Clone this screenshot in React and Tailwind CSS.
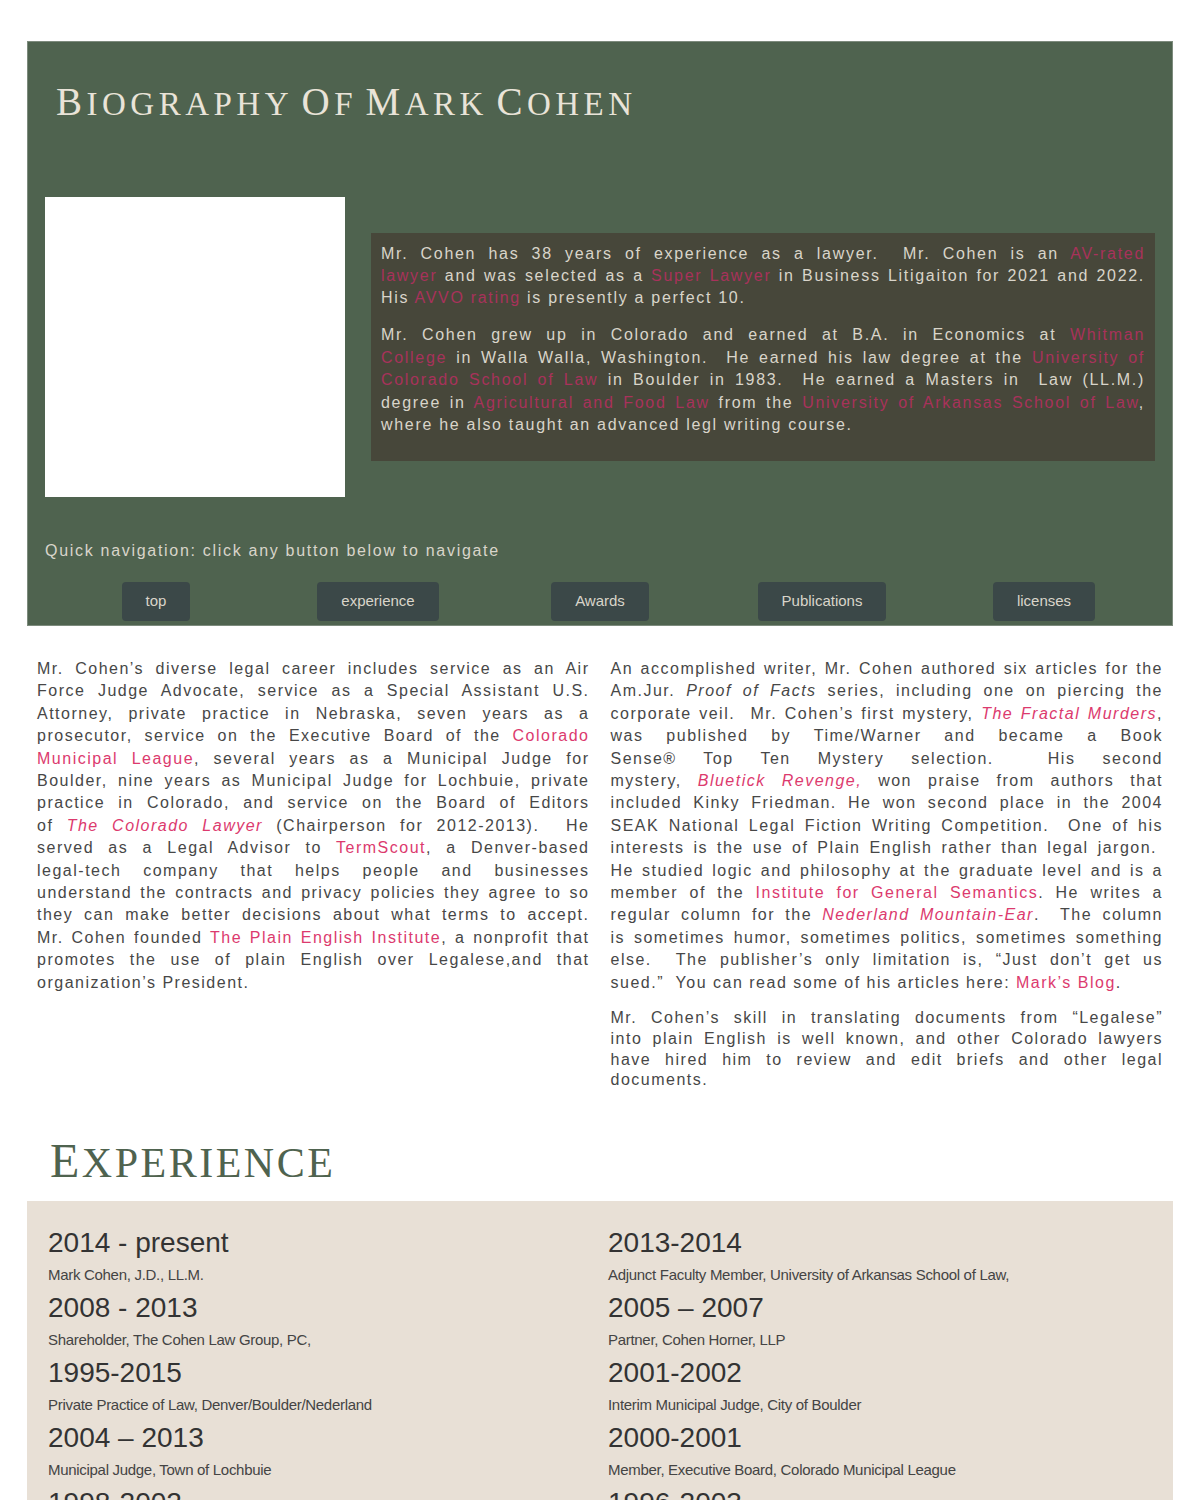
import React from 'react';

const navItems = ['top', 'experience', 'Awards', 'Publications', 'licenses'];

const leftJobs = [
  ['2014 - present', 'Mark Cohen, J.D., LL.M.'],
  ['2008 - 2013', 'Shareholder, The Cohen Law Group, PC,'],
  ['1995-2015', 'Private Practice of Law, Denver/Boulder/Nederland'],
  ['2004 – 2013', 'Municipal Judge, Town of Lochbuie'],
  ['1998-2002', 'Board of Editors, The Colorado Lawyer'],
];

const rightJobs = [
  ['2013-2014', 'Adjunct Faculty Member, University of Arkansas School of Law,'],
  ['2005 – 2007', 'Partner, Cohen Horner, LLP'],
  ['2001-2002', 'Interim Municipal Judge, City of Boulder'],
  ['2000-2001', 'Member, Executive Board, Colorado Municipal League'],
  ['1996-2003', 'Prosecutor, Boulder County'],
];

const sp = '\u00a0 ';

// small caps heading: first letter of each word larger
function SmallCaps({ text, big, small }) {
  return text.split(' ').map((word, i) => (
    <span key={i}>
      {i > 0 && ' '}
      <span className={big}>{word[0]}</span>
      <span className={small}>{word.slice(1).toUpperCase()}</span>
    </span>
  ));
}

function A({ children, italic }) {
  return (
    <a href="#" className={`text-[#dc3a6e] ${italic ? 'italic' : ''}`}>
      {children}
    </a>
  );
}

function B({ children }) {
  return <a href="#" className="text-[#a8325b]">{children}</a>;
}

// justified paragraph, broken the way the original page breaks it
function Lines({ lines, className = '' }) {
  return (
    <p className={`text-justify ${className}`}>
      {lines.map((line, i) => (
        <span
          key={i}
          className={`block whitespace-nowrap ${i < lines.length - 1 ? '[text-align-last:justify]' : ''}`}
        >
          {line}
        </span>
      ))}
    </p>
  );
}

function Jobs({ items }) {
  return (
    <div className="flex flex-col gap-[7px]">
      {items.map(([year, desc]) => (
        <div key={year}>
          <div className="text-[28px] leading-[32px] text-[#333]">{year}</div>
          <div className="mt-[6px] text-[15px] leading-[20px] tracking-[-0.3px] text-[#444]">
            {desc}
          </div>
        </div>
      ))}
    </div>
  );
}

export default function App() {
  return (
    <div className="min-h-screen bg-white pt-[41px] font-['Liberation_Sans',Arial,sans-serif]">
      {/* Header */}
      <section className="mx-[27px] bg-[#4f634f] border border-[#7d8b7d] px-[17px] pb-[4px]">
        <h1 className="pt-[40px] pl-[11px] h-[81px] leading-[40px] tracking-[4.5px] text-[#e9e3d8] font-['Liberation_Serif',serif] font-normal">
          <SmallCaps text="Biography Of Mark Cohen" big="text-[39px] leading-[40px]" small="text-[33px] leading-[40px]" />
        </h1>

        <div className="mt-[74px] flex items-center gap-[26px]">
          <div className="w-[300px] h-[300px] shrink-0 bg-white"></div>
          <div className="flex-1 bg-[#47473a] px-[10px] pt-[10px] pb-[25px] text-[16px] leading-[22.4px] tracking-[1.7px] text-[#d9d5ca]">
            <Lines
              className="mb-[14.6px]"
              lines={[
                <>Mr. Cohen has 38 years of experience as a lawyer.{sp}Mr. Cohen is an <B>AV-rated</B></>,
                <><B>lawyer</B> and was selected as a <B>Super Lawyer</B> in Business Litigaiton for 2021 and 2022.</>,
                <>His <B>AVVO rating</B> is presently a perfect 10.</>,
              ]}
            />
            <Lines
              lines={[
                <>Mr. Cohen grew up in Colorado and earned at B.A. in Economics at <B>Whitman</B></>,
                <><B>College</B> in Walla Walla, Washington.{sp}He earned his law degree at the <B>University of</B></>,
                <><B>Colorado School of Law</B> in Boulder in 1983.{sp}He earned a Masters in{sp}Law (LL.M.)</>,
                <>degree in <B>Agricultural and Food Law</B> from the <B>University of Arkansas School of Law</B>,</>,
                <>where he also taught an advanced legl writing course.</>,
              ]}
            />
          </div>
        </div>

        <p className="mt-[43px] text-[16px] leading-[22px] tracking-[1.7px] text-[#d9d5ca]">
          Quick navigation: click any button below to navigate
        </p>

        <div className="mt-[20px] grid grid-cols-5">
          {navItems.map((item) => (
            <div key={item} className="flex justify-center">
              <button className="h-[39px] px-6 rounded-[4px] bg-[#3b4848] text-[15px] text-[#d9d5ca]">
                {item}
              </button>
            </div>
          ))}
        </div>
      </section>

      {/* Intro columns */}
      <div className="mt-[32px] px-[37px] grid grid-cols-2 gap-[21px] text-[16px] leading-[22.4px] tracking-[1.5px] text-[#474747]">
        <div>
          <Lines
            lines={[
              <>Mr. Cohen’s diverse legal career includes service as an Air</>,
              <>Force Judge Advocate, service as a Special Assistant U.S.</>,
              <>Attorney, private practice in Nebraska, seven years as a</>,
              <>prosecutor, service on the Executive Board of the <A>Colorado</A></>,
              <><A>Municipal League</A>, several years as a Municipal Judge for</>,
              <>Boulder, nine years as Municipal Judge for Lochbuie, private</>,
              <>practice in Colorado, and service on the Board of Editors</>,
              <>of <A italic>The Colorado Lawyer</A> (Chairperson for 2012-2013).{sp}He</>,
              <>served as a Legal Advisor to <A>TermScout</A>, a Denver-based</>,
              <>legal-tech company that helps people and businesses</>,
              <>understand the contracts and privacy policies they agree to so</>,
              <>they can make better decisions about what terms to accept.</>,
              <>Mr. Cohen founded <A>The Plain English Institute</A>, a nonprofit that</>,
              <>promotes the use of plain English over Legalese,and that</>,
              <>organization’s President.</>,
            ]}
          />
        </div>
        <div>
          <Lines
            lines={[
              <>An accomplished writer, Mr. Cohen authored six articles for the</>,
              <>Am.Jur. <em>Proof of Facts</em> series, including one on piercing the</>,
              <>corporate veil.{sp}Mr. Cohen’s first mystery, <A italic>The Fractal Murders</A>,</>,
              <>was published by Time/Warner and became a Book</>,
              <>Sense® Top Ten Mystery selection.{sp}His second</>,
              <>mystery, <A italic>Bluetick Revenge,</A> won praise from authors that</>,
              <>included Kinky Friedman. He won second place in the 2004</>,
              <>SEAK National Legal Fiction Writing Competition.{sp}One of his</>,
              <>interests is the use of Plain English rather than legal jargon.{'\u00a0'}</>,
              <>He studied logic and philosophy at the graduate level and is a</>,
              <>member of the <A>Institute for General Semantics</A>. He writes a</>,
              <>regular column for the <A italic>Nederland Mountain-Ear</A>.{sp}The column</>,
              <>is sometimes humor, sometimes politics, sometimes something</>,
              <>else.{sp}The publisher’s only limitation is, “Just don’t get us</>,
              <>sued.”{sp}You can read some of his articles here: <A>Mark’s Blog</A>.</>,
            ]}
          />
          <Lines
            className="mt-[14px] leading-[20.7px]"
            lines={[
              <>Mr. Cohen’s skill in translating documents from “Legalese”</>,
              <>into plain English is well known, and other Colorado lawyers</>,
              <>have hired him to review and edit briefs and other legal</>,
              <>documents.</>,
            ]}
          />
        </div>
      </div>

      {/* Experience */}
      <h2 className="mt-[42px] pl-[50px] h-[56px] leading-[56px] tracking-[2.5px] text-[#4f634f] font-['Liberation_Serif',serif] font-normal">
        <SmallCaps text="Experience" big="text-[48px] leading-[56px]" small="text-[42px] leading-[56px]" />
      </h2>
      <section className="mt-[12px] mx-[27px] bg-[#e8e0d6] px-[21px] pt-[26px] pb-[30px] grid grid-cols-2 gap-[16px]">
        <Jobs items={leftJobs} />
        <Jobs items={rightJobs} />
      </section>
    </div>
  );
}
